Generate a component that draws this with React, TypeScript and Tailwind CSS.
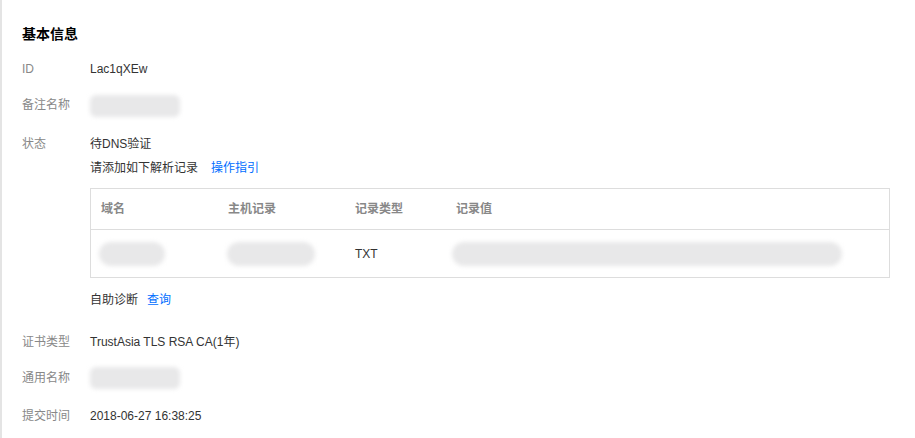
/**
 * Certificate detail: basic information panel with DNS verification records.
 */

type Row = { label: string; value: React.ReactNode; className?: string };

function Blur({ className }: { className: string }) {
  return <div className={`rounded-full bg-[#e8e8e9] blur-[2px] ${className}`} />;
}

const columns = [
  { title: '域名', width: 'w-[127px]' },
  { title: '主机记录', width: 'w-[127px]' },
  { title: '记录类型', width: 'w-[101px]' },
  { title: '记录值', width: 'flex-1' },
];

function DnsTable() {
  return (
    <div className="mt-[11px] w-[800px] border border-[#dddddd]">
      <div className="flex h-[41px] items-center border-b border-[#dddddd]">
        {columns.map((c) => (
          <div key={c.title} className={`${c.width} pl-[10px] font-bold text-[#888888]`}>
            {c.title}
          </div>
        ))}
      </div>
      <div className="flex h-[47px] items-center">
        <div className="w-[127px] pl-[8px]">
          <Blur className="h-[24px] w-[66px]" />
        </div>
        <div className="w-[127px] pl-[9px]">
          <Blur className="h-[24px] w-[88px]" />
        </div>
        <div className="w-[101px] pl-[10px] text-[#333333]">TXT</div>
        <div className="flex-1 pl-[6px]">
          <Blur className="h-[24px] w-[390px]" />
        </div>
      </div>
    </div>
  );
}

export default function App() {
  const rows: Row[] = [
    { label: 'ID', value: 'Lac1qXEw' },
    { label: '备注名称', value: <Blur className="mt-[-1px] h-[22px] w-[90px] rounded-md" /> },
    {
      label: '状态',
      className: 'mb-[6px]',
      value: (
        <div>
          <div className="text-[#333333]">待DNS验证</div>
          <div className="mt-[6px] flex gap-[13px]">
            <span className="text-[#333333]">请添加如下解析记录</span>
            <span className="text-[#006eff]">操作指引</span>
          </div>
          <DnsTable />
          <div className="mt-[13px] flex gap-[9px]">
            <span className="text-[#333333]">自助诊断</span>
            <span className="text-[#006eff]">查询</span>
          </div>
        </div>
      ),
    },
    { label: '证书类型', value: 'TrustAsia TLS RSA CA(1年)' },
    { label: '通用名称', value: <Blur className="mt-[-2px] h-[22px] w-[90px] rounded-md" /> },
    { label: '提交时间', value: '2018-06-27 16:38:25' },
  ];

  return (
    <div className="h-[438px] w-[915px] overflow-hidden border-l-2 border-[#e4e4e4] bg-white font-['Liberation_Sans','Noto_Sans_CJK_SC',sans-serif] text-[12px] leading-[18px]">
      <div className="pl-[20px] pt-[24px]">
        <h2 className="text-[14px] font-bold leading-[20px] text-[#000000]">基本信息</h2>
        <div className="mt-[16px] flex flex-col gap-[18px]">
          {rows.map((r) => (
            <div key={r.label} className={`flex ${r.className ?? ''}`}>
              <div className="w-[68px] shrink-0 text-[#888888]">{r.label}</div>
              <div className="text-[#333333]">{r.value}</div>
            </div>
          ))}
        </div>
      </div>
    </div>
  );
}
